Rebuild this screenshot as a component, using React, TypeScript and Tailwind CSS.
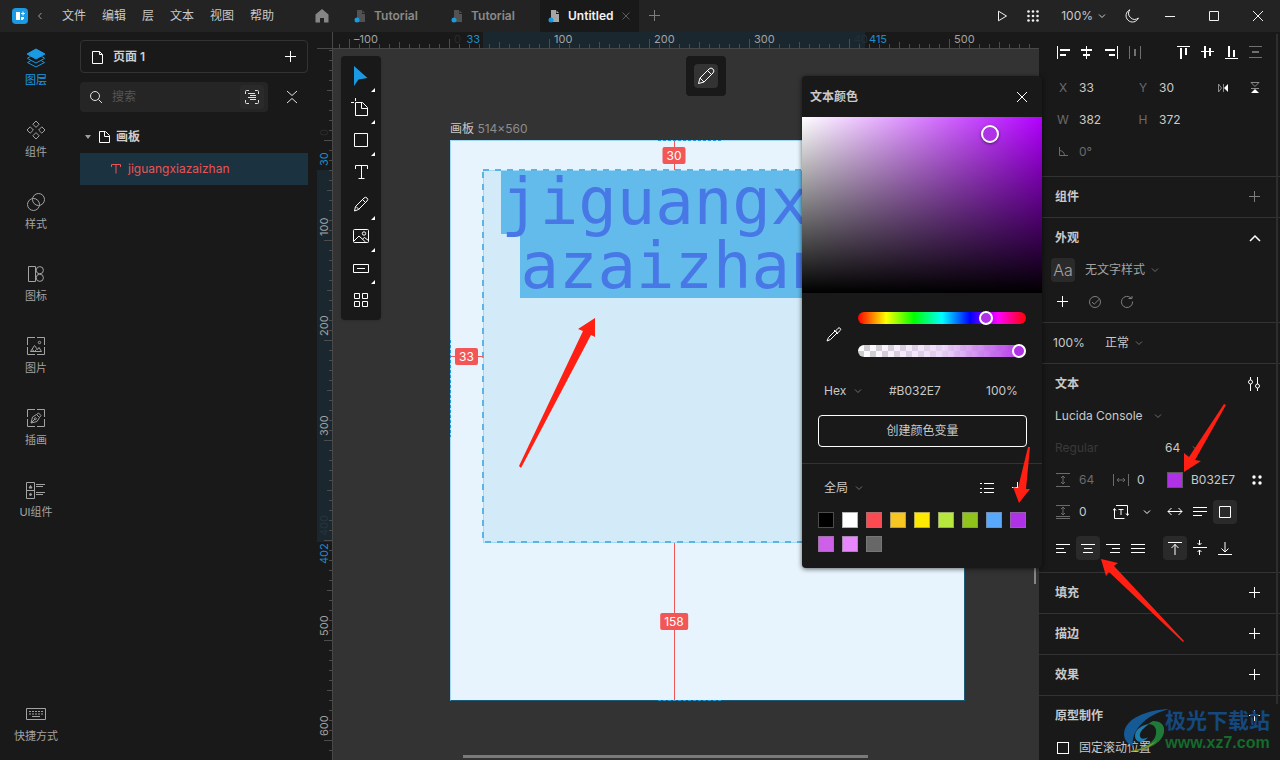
import type { ReactNode } from 'react'

const SWATCHES = [
  '#000000', '#ffffff', '#fc4a52', '#f6c622', '#fce800', '#b6e83e', '#90c41c', '#58a9fb', '#b032e7',
  '#ce5fe8', '#e688fc', '#676767',
]

interface IconProps {
  size?: number
  w?: number
  className?: string
  children: ReactNode
}

function Icon({ size = 16, w = 1, className = '', children }: IconProps) {
  return (
    <svg
      width={size}
      height={size}
      viewBox={`0 0 ${size} ${size}`}
      fill="none"
      stroke="currentColor"
      strokeWidth={w}
      className={`shrink-0 ${className}`}
      aria-hidden="true"
    >
      {children}
    </svg>
  )
}

function Chevron({ className = 'text-[#6e6e6e]' }: { className?: string }) {
  return (
    <Icon size={8} className={`pointer-events-none ${className}`}>
      <path d="M1 2.500l3 3 3-3" />
    </Icon>
  )
}

function Plus({ className = 'text-white' }: { className?: string }) {
  return (
    <Icon size={12} className={className}>
      <path d="M5.500 0v11M0 5.500h11" />
    </Icon>
  )
}

function IconButton({ label, active, children }: { label: string; active?: boolean; children: ReactNode }) {
  return (
    <button
      aria-label={label}
      className={`flex size-6 shrink-0 items-center justify-center rounded ${active ? 'bg-[#2a2a2a]' : ''}`}
    >
      {children}
    </button>
  )
}

/* ---------- Title bar ---------- */

const MENUS = ['文件', '编辑', '层', '文本', '视图', '帮助']

function FileTab({ name, active }: { name: string; active?: boolean }) {
  return (
    <div
      className={`flex h-8 items-center gap-2 px-2 ${
        active ? 'w-[99px] bg-[#191919] text-[#f2f2f2]' : 'w-[97px] text-[#8a8a8a]'
      }`}
    >
      <svg width="12" height="14" viewBox="0 0 12 14" aria-hidden="true" className="shrink-0">
        <path d="M3 1h5v4h3v8H3z" fill={active ? '#a6a6a6' : '#525252'} />
        <path d="M8.500 1.500L11 4H8.500z" fill={active ? '#a6a6a6' : '#525252'} />
        <circle cx="3" cy="11" r="2.500" fill="#1b9ae4" />
      </svg>
      <a href="#" className="text-xs font-semibold">{name}</a>
      {active && (
        <button aria-label="关闭标签" className="text-[#5e5e5e]">
          <Icon size={8}><path d="M.5.5l7 7M7.500.5l-7 7" /></Icon>
        </button>
      )}
    </div>
  )
}

function TitleBar() {
  return (
    <header className="flex h-8 shrink-0 items-center bg-[#232323]">
      <div className="flex w-[315px] shrink-0 items-center pl-3">
        <svg width="16" height="16" viewBox="0 0 16 16" aria-hidden="true">
          <rect width="16" height="16" rx="4" fill="#1b9ae4" />
          <path d="M4 4h4v8H4zM9 9h3v1.500L10.500 12H9zM10.500 3.500h1v1.500H13v1h-1.500v1.500h-1V6H9V5h1.500z" fill="#fff" />
        </svg>
        <Icon size={8} className="ml-2 text-[#a0a0a0]"><path d="M5.500 1l-3 3 3 3" /></Icon>
        <nav className="ml-[18px] flex gap-4">
          {MENUS.map((m) => (
            <button key={m} className="text-xs text-[#c9c9c9]">{m}</button>
          ))}
        </nav>
      </div>
      <button aria-label="首页" className="text-[#858585]">
        <svg width="14" height="14" viewBox="0 0 14 14" fill="currentColor">
          <path d="M7 0L.5 5.500V13.500h4.500V9h4v4.500h4.500V5.500z" />
        </svg>
      </button>
      <div className="ml-[17px] flex">
        <FileTab name="Tutorial" />
        <FileTab name="Tutorial" />
        <FileTab name="Untitled" active />
      </div>
      <button aria-label="新建标签" className="ml-2.5">
        <Plus className="text-[#7d7d7d]" />
      </button>
      <div className="ml-auto flex items-center pr-4 text-[#f0f0f0]">
        <button aria-label="预览">
          <Icon size={12}><path d="M1.500 1.200v9.600L9.500 6z" /></Icon>
        </button>
        <button aria-label="网格" className="ml-[18px]">
          <svg width="12" height="12" viewBox="0 0 12 12" fill="currentColor">
            {[1.5, 6, 10.5].map((y) => [1.5, 6, 10.5].map((x) => <circle key={`${x}-${y}`} cx={x} cy={y} r="1.300" />))}
          </svg>
        </button>
        <button className="ml-[22px] flex items-center gap-[5px] text-xs text-[#c9c9c9]">
          100%
          <Chevron className="text-[#d0d0d0]" />
        </button>
        <button aria-label="深色模式" className="ml-[19px]">
          <Icon size={14}><path d="M4.800.8a6.400 6.400 0 1 0 8.600 8.200A6 6 0 0 1 4.800.8z" /></Icon>
        </button>
        <button aria-label="最小化" className="ml-[25px]">
          <Icon size={12}><path d="M1 6.500h10" /></Icon>
        </button>
        <button aria-label="最大化" className="ml-8">
          <Icon size={12}><path d="M1.500 1.500h9v9h-9z" /></Icon>
        </button>
        <button aria-label="关闭" className="ml-8">
          <Icon size={12}><path d="M1 1l10 10M11 1L1 11" /></Icon>
        </button>
      </div>
    </header>
  )
}

/* ---------- Left rail ---------- */

const RAIL: { label: string; icon: ReactNode }[] = [
  {
    label: '图层',
    icon: (
      <>
        <path d="M10 1L19 6l-9 5-9-5z" fill="currentColor" />
        <path d="M1.500 10.500L10 15l8.500-4.500M1.500 10l3-1.500M18.500 10l-3-1.500M1.500 14.500L10 19l8.500-4.500M1.500 14.500l3-1.500M18.500 14.500l-3-1.500" />
      </>
    ),
  },
  {
    label: '组件',
    icon: (
      <path d="M10 1l3.200 3.200L10 7.400 6.800 4.200zM10 12.600l3.200 3.200L10 19l-3.200-3.200zM4.200 6.800L7.400 10l-3.200 3.200L1 10zM15.800 6.800L19 10l-3.200 3.200-3.200-3.200z" />
    ),
  },
  {
    label: '样式',
    icon: (
      <>
        <circle cx="12.500" cy="7.500" r="6" />
        <circle cx="7.500" cy="12.500" r="6" />
      </>
    ),
  },
  {
    label: '图标',
    icon: (
      <>
        <path d="M2.500 2.500h7v15h-7z" />
        <circle cx="13.800" cy="6.200" r="3.600" />
        <circle cx="13.800" cy="13.800" r="3.600" />
      </>
    ),
  },
  {
    label: '图片',
    icon: (
      <>
        <path d="M9 1.500H1.500V9M11 1.500h7.500V9M1.500 11v7.500H9M18.500 11v7.500H11" />
        <path d="M4.500 15.500l4-6 3 4 1.500-2 2.500 4zM6 13.500l2.500 2 2-2" />
        <circle cx="13.500" cy="6.500" r="1.200" />
      </>
    ),
  },
  {
    label: '插画',
    icon: (
      <>
        <path d="M9 1.500H1.500V9M11 1.500h7.500V9M1.500 11v7.500H9M18.500 11v7.500H11" />
        <path d="M5 15l1.500-6 4-2.500 3 3-2.500 4zM10.500 6.500L12.500 5 15 7.500l-1.500 2M5 15l4-4" />
        <circle cx="9.300" cy="10.700" r="1" />
      </>
    ),
  },
  {
    label: 'UI组件',
    icon: (
      <>
        <path d="M.5 2.500h8v16h-8zM.5 10.500h8M10 4.500h9M10 6.500h7M10 12.500h9M10 14.500h7" />
        <path d="M3 8l1.500-2.500L6 8z" fill="currentColor" />
        <circle cx="4.500" cy="14.500" r="1" fill="currentColor" />
      </>
    ),
  },
]

function Rail() {
  return (
    <nav className="flex w-[72px] shrink-0 flex-col justify-between pt-4 pb-4">
      <div className="flex flex-col gap-8">
        {RAIL.map((item, i) => (
          <button
            key={item.label}
            className={`flex flex-col items-center gap-1 text-[11px] leading-4 ${
              i === 0 ? 'text-[#1b9ae4]' : 'text-[#a3a3a3]'
            }`}
          >
            <Icon size={20}>{item.icon}</Icon>
            {item.label}
          </button>
        ))}
      </div>
      <button className="flex flex-col items-center gap-1 text-[11px] leading-4 text-[#a3a3a3]">
        <Icon size={20}>
          <path d="M.5 4.500h19v11H.5z" />
          <path d="M3 7.500h14M3 10h14" strokeDasharray="2 1" />
          <path d="M6 12.500h8" />
        </Icon>
        快捷方式
      </button>
    </nav>
  )
}

/* ---------- Layers ---------- */

function LayersPanel() {
  return (
    <aside className="w-[245px] shrink-0 pt-2 pr-[9px] pl-2 text-xs">
      <div className="flex h-[33px] items-center rounded border border-[#333] pr-2.5 pl-2">
        <Icon className="text-white"><path d="M3.500 2.500h7l3 3v9h-10zM10.500 2.500v3h3" /></Icon>
        <span className="ml-2 font-semibold text-[#cfcfcf]">页面 1</span>
        <button aria-label="添加页面" className="ml-auto">
          <Plus />
        </button>
      </div>
      <div className="mt-[9px] flex items-center">
        <label className="flex h-[30px] flex-1 items-center rounded bg-[#252525] pr-1 pl-2">
          <Icon className="text-[#e2e2e2]">
            <circle cx="7" cy="7" r="4.500" />
            <path d="M10.500 10.500L14 14" />
          </Icon>
          <input
            type="text"
            placeholder="搜索"
            aria-label="搜索"
            className="ml-2 w-full min-w-0 flex-1 bg-transparent placeholder:text-[#555]"
          />
          <IconButton label="筛选" active>
            <Icon className="text-[#e2e2e2]">
              <path d="M1.500 5V2.500a1 1 0 0 1 1-1H5M11 1.500h2.500a1 1 0 0 1 1 1V5M14.500 11v2.500a1 1 0 0 1-1 1H11M5 14.500H2.500a1 1 0 0 1-1-1V11M4 4.500h7M6 6.500h6M4 8.500h8M6 10.500h6" />
            </Icon>
          </IconButton>
        </label>
        <button aria-label="全部折叠" className="mr-2 ml-4 text-[#e2e2e2]">
          <Icon><path d="M3 2l5 4.500L13 2M3 14l5-4.500 5 4.500" /></Icon>
        </button>
      </div>
      <ul className="mt-[9px]">
        <li className="flex h-8 items-center pl-[5px]">
          <svg width="6" height="5" viewBox="0 0 6 5" fill="#a0a0a0" aria-hidden="true"><path d="M0 0h6L3 4z" /></svg>
          <Icon size={14} className="ml-[7px] text-white">
            <path d="M1.500 1.500h6l4 4v7h-10zM6.500 1.500v5h5" />
          </Icon>
          <span className="ml-1 font-semibold text-[#cfcfcf]">画板</span>
        </li>
        <li className="flex h-8 items-center bg-[#1b3240] pl-[31px] text-[#ea5455]">
          <Icon size={10}><path d="M.5 3V.5h9V3M5 .5v9" /></Icon>
          <span className="ml-[7px]">jiguangxiazaizhan</span>
        </li>
      </ul>
    </aside>
  )
}

/* ---------- Rulers ---------- */

function tickLength(v: number) {
  if (v % 100 === 0) return 9
  return v % 50 === 0 ? 6 : 4
}

function range(from: number, to: number) {
  const out: number[] = []
  for (let v = from; v <= to; v += 10) out.push(v)
  return out
}

// origin of the artboard, measured from the start of each ruler
const ORIGIN_X = 132
const ORIGIN_Y = 91

function TopRuler() {
  return (
    <svg className="block h-[17px] w-full text-[11px]" aria-hidden="true">
      <rect x={ORIGIN_X + 34} y="0" width="382" height="16" fill="#1a272f" />
      {range(-110, 2400).map((v) => (
        <path key={v} d={`M${ORIGIN_X + v + 0.5} ${16 - tickLength(v)}v${tickLength(v)}`} stroke="#4c4c4c" />
      ))}
      {[-100, 100, 200, 300, 500].map((v) => (
        <text key={v} x={ORIGIN_X + v + 5} y="11" fill="#a3a3a3">{v < 0 ? `–${-v}` : v}</text>
      ))}
      <text x={ORIGIN_X + 5} y="11" fill="#2b2b2b">0</text>
      <text x={ORIGIN_X + 405} y="11" fill="#223038">40</text>
      <text x={ORIGIN_X + 31} y="11" fill="#1b8fd0" textAnchor="end">33</text>
      <text x={ORIGIN_X + 420} y="11" fill="#1b8fd0">415</text>
      <path d="M0 16.500h4000M15.500 0v17" stroke="#484848" />
    </svg>
  )
}

function LeftRuler() {
  const label = (v: number, y: number, fill: string) => (
    <text key={`${v}-${y}`} transform={`translate(11 ${y}) rotate(-90)`} fill={fill}>{v}</text>
  )
  return (
    <svg className="block h-full w-4 shrink-0 text-[11px]" aria-hidden="true">
      <rect x="0" y={ORIGIN_Y + 30} width="15" height="372" fill="#1a272f" />
      {range(-90, 1600).map((v) => (
        <path key={v} d={`M${16 - tickLength(v)} ${ORIGIN_Y + v + 0.5}h${tickLength(v)}`} stroke="#4c4c4c" />
      ))}
      {[100, 200, 300, 500, 600].map((v) => label(v, ORIGIN_Y + v - 4, '#a3a3a3'))}
      {label(0, ORIGIN_Y - 4, '#2b2b2b')}
      {label(400, ORIGIN_Y + 396, '#26343c')}
      {label(30, ORIGIN_Y + 26, '#1b8fd0')}
      {label(402, ORIGIN_Y + 424, '#1b8fd0')}
      <path d="M15.500 0v3000" stroke="#484848" />
    </svg>
  )
}

/* ---------- Canvas ---------- */

const TOOLS: { label: string; more?: boolean; icon: ReactNode }[] = [
  { label: '选择', more: true, icon: <path d="M3 0v20l4.500-6.500L16.500 12z" fill="#1b9ae4" stroke="none" /> },
  { label: '画板', more: true, icon: <path d="M4.500 4.500h7l5 5v8h-12zM10.500 4.500v6h6M0 4.500h3M4.500 0v3" /> },
  { label: '矩形', more: true, icon: <path d="M3.500 3.500h13v13h-13z" /> },
  { label: '文本', icon: <path d="M4.500 7V3.500h12V7M10.500 3.500v13M7.500 16.500h6" /> },
  {
    label: '钢笔',
    more: true,
    icon: <path d="M3.500 17l1-4.500L13 4a2 2 0 0 1 3 3l-8.500 8.500zM5 12.500l3 3M11.500 5.500l3 3" />,
  },
  {
    label: '图片',
    more: true,
    icon: (
      <>
        <rect x="2.500" y="3.500" width="15" height="13" rx="1" />
        <path d="M3 15l5-5 6.500 6M11.500 13l2-1.500 4 3" />
        <circle cx="13" cy="7.500" r="1.700" />
      </>
    ),
  },
  { label: '按钮', more: true, icon: <path d="M2.500 6.500h15v8h-15zM6 10.500h8" /> },
  { label: '组件', icon: <path d="M3.500 3.500h5v5h-5zM11.500 3.500h5v5h-5zM3.500 11.500h5v5h-5zM11.500 11.500h5v5h-5z" /> },
]

function Toolbar() {
  return (
    <div className="absolute top-[7px] left-2 flex w-10 flex-col rounded bg-[#191919] py-1 shadow">
      {TOOLS.map((tool) => (
        <button key={tool.label} aria-label={tool.label} className="relative flex h-8 items-center justify-center text-white">
          <Icon size={20}>{tool.icon}</Icon>
          {tool.more && (
            <svg width="4" height="4" className="absolute right-1.5 bottom-0" fill="#fff" aria-hidden="true">
              <path d="M4 0v4H0z" />
            </svg>
          )}
        </button>
      ))}
    </div>
  )
}

function Artboard() {
  return (
    <div className="absolute top-[91px] left-[117px] h-[561px] w-[515px] border border-t-[#9fd8f5] border-r-[#1d5a78] border-b-[#1d5a78] border-l-[#9fd8f5] bg-[#e7f4fd]">
      <p className="absolute -top-5 -left-px text-xs leading-4 whitespace-nowrap text-[#8c8c8c]">
        <span className="text-[#c9c9c9]">画板</span> 514×560
      </p>
      <div className="absolute top-[29px] left-8 h-[373px] w-[383px] bg-[#d3ebf8]">
        <div className="mx-auto h-16 w-[348px] bg-[#63bbec]" />
        <div className="mx-auto h-16 w-[309px] bg-[#63bbec]" />
        <p className="absolute inset-x-0 top-0 text-center font-['DejaVu_Sans_Mono',monospace] text-[64px] leading-[64px] break-all text-[#4878e6]">
          jiguangxiazaizhan
        </p>
      </div>
      {/* text frame, snapping guides and distances */}
      <svg width="515" height="561" className="absolute -top-px -left-px" fill="none" aria-hidden="true">
        <rect x="33.500" y="30.500" width="382" height="372" stroke="#a5daf5" />
        <rect x="33" y="30" width="382" height="372" stroke="#5ab4e4" strokeWidth="2" strokeDasharray="6 6" />
        <path d="M208 .5h64M208 560.500h64M.5 200v97" stroke="#1b9ae4" strokeDasharray="3 2" />
        <path d="M224.500 1v29M224.500 403v157M1 216.500h32" stroke="#ee5555" />
      </svg>
      <span className="absolute top-1.5 left-[223px] -translate-x-1/2 rounded-xs bg-[#f25656] px-1 text-xs leading-[17px] text-white">30</span>
      <span className="absolute top-[207px] left-1 rounded-xs bg-[#f25656] px-1 text-xs leading-[17px] text-white">33</span>
      <span className="absolute top-[472px] left-[223px] -translate-x-1/2 rounded-xs bg-[#f25656] px-1 text-xs leading-[17px] text-white">158</span>
    </div>
  )
}

function ColorPopover() {
  return (
    <div className="absolute top-11 -right-[3px] z-10 w-60 rounded bg-[#191919] text-xs text-[#c9c9c9] shadow-[0_1px_5px_rgba(0,0,0,0.6)]">
      <div className="flex h-[41px] items-center justify-between pr-3.5 pl-2">
        <h2 className="font-semibold">文本颜色</h2>
        <button aria-label="关闭" className="text-white">
          <Icon size={12}><path d="M1 1l10 10M11 1L1 11" /></Icon>
        </button>
      </div>
      <div className="relative h-44 bg-[linear-gradient(to_top,#000,transparent),linear-gradient(to_right,#fff,#b200ff)]">
        <span className="absolute top-2 left-[179px] size-[18px] rounded-full border-2 border-white bg-[#b032e7] shadow-[0_1px_3px_rgba(0,0,0,0.5)]" />
      </div>
      <div className="flex h-[82px] items-center justify-between pr-4 pl-6">
        <button aria-label="吸管" className="text-white">
          <Icon>
            <path d="M1 15l1.500-3.500L9 5l2 2-6.500 6.500zM8 4l4 4M9.500 5L12 2.300a1.300 1.300 0 0 1 2.200 2.200L11.500 7z" />
          </Icon>
        </button>
        <div className="flex w-[168px] flex-col gap-[21px]">
          <input
            type="range"
            aria-label="色相"
            min={0}
            max={360}
            defaultValue={283}
            className="block h-3 w-full appearance-none rounded-full bg-[linear-gradient(to_right,#f00,#ff0,#0f0,#0ff,#00f,#f0f,#f00)] [&::-webkit-slider-thumb]:size-3.5 [&::-webkit-slider-thumb]:appearance-none [&::-webkit-slider-thumb]:rounded-full [&::-webkit-slider-thumb]:border-2 [&::-webkit-slider-thumb]:border-white [&::-webkit-slider-thumb]:bg-[#b032e7]"
          />
          <input
            type="range"
            aria-label="不透明度"
            defaultValue={100}
            className="block h-3 w-full appearance-none rounded-full bg-[linear-gradient(to_right,#ffffff00,#e9d0f8cc_50%,#b032e7),repeating-conic-gradient(#ccc_0_25%,#fff_0_50%)] bg-[length:100%_100%,12px_12px] [&::-webkit-slider-thumb]:size-3.5 [&::-webkit-slider-thumb]:appearance-none [&::-webkit-slider-thumb]:rounded-full [&::-webkit-slider-thumb]:border-2 [&::-webkit-slider-thumb]:border-white [&::-webkit-slider-thumb]:bg-[#b032e7]"
          />
        </div>
      </div>
      <div className="flex h-8 items-center pr-6 pl-[22px]">
        <Select label="颜色格式" value="Hex" width="w-[25px]" />
        <input aria-label="颜色值" defaultValue="#B032E7" className="ml-[27px] w-16 bg-transparent" />
        <input aria-label="透明度" defaultValue="100%" className="ml-auto w-8 bg-transparent" />
      </div>
      <button className="mx-4 mt-2 block h-8 w-[209px] rounded border border-white">
        创建颜色变量
      </button>
      <div className="mt-4 border-t border-[#333] px-4 pt-2 pb-4">
        <div className="flex h-8 items-center pl-1.5">
          <Select label="范围" value="全局" width="w-[26px]" />
          <button aria-label="列表视图" className="ml-auto text-white">
            <Icon size={14}><path d="M0 2.500h2M4 2.500h10M0 7.500h2M4 7.500h10M0 11.500h2M4 11.500h10" /></Icon>
          </button>
          <button aria-label="添加颜色" className="mr-0.5 ml-[18px]">
            <Plus />
          </button>
        </div>
        <div className="mt-2 grid grid-cols-9 gap-2">
          {SWATCHES.map((c) => (
            <button
              key={c}
              aria-label={c}
              className="size-4 border border-[#808080]/60"
              style={{ backgroundColor: c }}
            />
          ))}
        </div>
      </div>
      <svg width="18" height="58" viewBox="0 0 18 58" className="absolute top-[370px] left-[211px]" fill="#ff2013" aria-hidden="true">
        <path d="M15 1h2l-4 42h4L6 57 0 41l5 1z" />
      </svg>
    </div>
  )
}

function Canvas() {
  return (
    <main className="relative flex min-w-0 flex-1 flex-col">
      <TopRuler />
      <div className="flex min-h-0 flex-1">
        <LeftRuler />
        <div className="relative flex-1 overflow-hidden bg-[#333]">
          <Artboard />
          <Toolbar />
          <div className="absolute top-[7px] left-1/2 flex size-10 items-center justify-center rounded bg-[#191919]">
            <button aria-label="编辑" className="flex size-6 items-center justify-center rounded bg-[#333] text-white">
              <Icon size={20}>
                <path d="M2.500 17.500l1.500-5.500L13 3a2 2 0 0 1 4 4l-9 9zM4 12l4 4M11.500 4.500l4 4" />
              </Icon>
            </button>
          </div>
          <svg width="78" height="152" viewBox="0 0 78 152" className="absolute top-[268px] left-[186px]" fill="#ff2013" aria-hidden="true">
            <path d="M76 1L59 12l5 2L0 149l2 2L72 18l4 2z" />
          </svg>
          <div className="absolute bottom-0.5 left-[130px] h-[3px] w-[405px] bg-[#7a7a7a]" />
          <div className="absolute top-[440px] right-[3px] h-[95px] w-0.5 bg-[#858585]" />
        </div>
      </div>
      <ColorPopover />
    </main>
  )
}

/* ---------- Inspector ---------- */

interface SelectProps {
  label: string
  value: string
  width: string
  className?: string
}

function Select({ label, value, width, className = '' }: SelectProps) {
  return (
    <span className={`flex items-center gap-[5px] ${className}`}>
      <select aria-label={label} className={`appearance-none bg-transparent ${width}`}>
        <option>{value}</option>
      </select>
      <Chevron />
    </span>
  )
}

interface FieldProps {
  name: string
  value: string
  icon?: ReactNode
  dim?: boolean
  narrow?: boolean
}

function Field({ name, value, icon, dim, narrow }: FieldProps) {
  return (
    <label className={`flex shrink-0 items-center gap-1 ${narrow ? 'w-[58px]' : 'w-20'}`}>
      <span className="flex w-6 justify-center text-[#6b6b6b]">{icon ?? name}</span>
      <input
        aria-label={name}
        defaultValue={value}
        className={`w-7 bg-transparent ${dim ? 'text-[#6b6b6b]' : 'text-[#c9c9c9]'}`}
      />
    </label>
  )
}

function SectionTitle({ title, children }: { title: string; children?: ReactNode }) {
  return (
    <div className="flex h-10 items-center justify-between pr-[19px] pl-4">
      <h3 className="font-semibold">{title}</h3>
      <button aria-label={title}>{children ?? <Plus />}</button>
    </div>
  )
}

function AlignRow() {
  return (
    <div className="mt-1 flex h-8 items-center justify-between pr-[13px] pl-3 text-white">
      <div className="flex">
        <IconButton label="左对齐">
          <Icon><path d="M2.500 2v13" /><path d="M5 6h10M5 11h6" strokeWidth="2" /></Icon>
        </IconButton>
        <IconButton label="水平居中">
          <Icon><path d="M7.500 2v13" /><path d="M2 6h11M4 11h7" strokeWidth="2" /></Icon>
        </IconButton>
        <IconButton label="右对齐">
          <Icon><path d="M14.500 2v13" /><path d="M2 6h10M6 11h6" strokeWidth="2" /></Icon>
        </IconButton>
        <IconButton label="水平分布">
          <Icon className="text-[#707070]"><path d="M2.500 2v13M13.500 2v13" /><path d="M8 5v7" strokeWidth="2" /></Icon>
        </IconButton>
      </div>
      <div className="flex">
        <IconButton label="顶对齐">
          <Icon><path d="M2 2.500h13" /><path d="M6 4v11M11 4v7" strokeWidth="2" /></Icon>
        </IconButton>
        <IconButton label="垂直居中">
          <Icon><path d="M2 7.500h13" /><path d="M6 2v12M11 4v8" strokeWidth="2" /></Icon>
        </IconButton>
        <IconButton label="底对齐">
          <Icon><path d="M2 14.500h13" /><path d="M6 2v11M11 6v7" strokeWidth="2" /></Icon>
        </IconButton>
        <IconButton label="垂直分布">
          <Icon className="text-[#707070]"><path d="M2 2.500h13M2 13.500h13" /><path d="M5 8h7" strokeWidth="2" /></Icon>
        </IconButton>
      </div>
    </div>
  )
}

function TextSection() {
  return (
    <section className="border-b border-[#333] pb-3">
      <SectionTitle title="文本">
        <Icon size={14} className="text-white">
          <path d="M3.500 0v3M3.500 7v7M10.500 0v7M10.500 11v3" />
          <circle cx="3.500" cy="5" r="2" />
          <circle cx="10.500" cy="9" r="2" />
        </Icon>
      </SectionTitle>
      <div className="flex h-6 items-center pl-4">
        <Select label="字体" value="Lucida Console" width="w-[94px]" />
      </div>
      <div className="mt-1 flex h-8 items-center pl-4">
        <span className="w-[110px] text-[#3a3a3a]">Regular</span>
        <Select label="字号" value="64" width="w-[22px]" />
      </div>
      <div className="flex h-8 items-center pr-[18px] pl-3">
        <Field
          narrow
          name="行高"
          value="64"
          dim
          icon={<Icon><path d="M1 1.500h14M1 14.500h14M8 4v8M6 6l2-2 2 2M6 10l2 2 2-2" /></Icon>}
        />
        <Field
          narrow
          name="字间距"
          value="0"
          icon={<Icon><path d="M.5 2v12M15.500 2v12M4 8h8M6 6L4 8l2 2M10 6l2 2-2 2" /></Icon>}
        />
        <button aria-label="文本颜色" className="size-4 shrink-0 border border-[#5a5a5a] bg-[#b032e7]" />
        <input aria-label="色值" defaultValue="B032E7" className="ml-2 w-14 bg-transparent" />
        <button aria-label="变量" className="ml-auto text-white">
          <svg width="10" height="10" viewBox="0 0 10 10" fill="currentColor">
            <circle cx="2" cy="2" r="1.700" />
            <circle cx="8" cy="2" r="1.700" />
            <circle cx="2" cy="8" r="1.700" />
            <circle cx="8" cy="8" r="1.700" />
          </svg>
        </button>
      </div>
      <div className="flex h-8 items-center pl-3 text-white">
        <Field
          narrow
          name="段间距"
          value="0"
          icon={<Icon><path d="M1 1.500h14M1 12.500h14M1 14.500h14M8 3v8M6 5l2-2 2 2M6 9l2 2 2-2" /></Icon>}
        />
        <IconButton label="文本框">
          <Icon><path d="M1.500 5v9.500h10M3 1.500h11.500V11M0 6.500l1.500-2 1.500 2M13 9.500l1.500 2 1.500-2M5.500 5.500h5M8 5.500V11" /></Icon>
        </IconButton>
        <Chevron className="ml-2.5 text-white" />
        <div className="ml-3 flex gap-px">
          <IconButton label="自动宽度">
            <Icon><path d="M1 7.500h14M4.500 4L1 7.500 4.500 11M11.500 4L15 7.500 11.500 11" /></Icon>
          </IconButton>
          <IconButton label="自动高度">
            <Icon><path d="M1 3.500h14M1 7.500h14M1 11.500h9" /></Icon>
          </IconButton>
          <IconButton label="固定尺寸" active>
            <Icon><path d="M2.500 2.500h11v11h-11z" /></Icon>
          </IconButton>
        </div>
      </div>
      <div className="mt-2 flex h-6 items-center pl-3 text-white">
        <div className="flex gap-px">
          <IconButton label="文本左对齐">
            <Icon><path d="M1 4.500h14M1 8.500h8M1 12.500h10" /></Icon>
          </IconButton>
          <IconButton label="文本居中" active>
            <Icon><path d="M1 4.500h14M4 8.500h8M3 12.500h10" /></Icon>
          </IconButton>
          <IconButton label="文本右对齐">
            <Icon><path d="M1 4.500h14M7 8.500h8M5 12.500h10" /></Icon>
          </IconButton>
          <IconButton label="两端对齐">
            <Icon><path d="M1 4.500h14M1 8.500h14M1 12.500h14" /></Icon>
          </IconButton>
        </div>
        <div className="ml-[13px] flex gap-px">
          <IconButton label="文本顶对齐" active>
            <Icon><path d="M1 2.500h14M8 4v11M4.500 8L8 4.500 11.500 8" /></Icon>
          </IconButton>
          <IconButton label="文本垂直居中">
            <Icon><path d="M1 7.500h14M7.500 0v5M5.500 3l2 2 2-2M7.500 15v-5M5.500 12l2-2 2 2" /></Icon>
          </IconButton>
          <IconButton label="文本底对齐">
            <Icon><path d="M1 14.500h14M8 2v10M4.500 8.500L8 12l3.500-3.500" /></Icon>
          </IconButton>
        </div>
      </div>
    </section>
  )
}

function Watermark() {
  return (
    <div className="pointer-events-none absolute right-2.5 bottom-1.5 flex items-center">
      <svg width="46" height="46" viewBox="0 0 46 46" aria-hidden="true">
        <path d="M46 1C24 2 2 10 1 26c0 6 4 10 9 12C8 24 20 8 46 1z" fill="#155a94" />
        <path d="M30 13c8 0 12 4 11 11C39 36 24 42 8 43c14-3 24-9 25-17 1-6-2-10-8-10z" fill="#1f7a3a" />
        <path d="M26 16c-8 1-14 6-14 12 0 7 9 8 13 1-4 3-9 2-8-3 1-4 5-7 9-10z" fill="#1c7db0" />
        <path d="M6 43c10 1 22-3 28-11-7 6-17 10-28 11z" fill="#8a9a20" />
      </svg>
      <div className="-ml-1 flex flex-col items-center font-bold whitespace-nowrap">
        <span className="text-[21px] leading-6 text-[#15487d]">极光下载站</span>
        <span className="font-['Liberation_Sans',sans-serif] text-base leading-5 text-[#136b2c]">www.xz7.com</span>
      </div>
    </div>
  )
}

function Inspector() {
  return (
    <aside className="relative w-[241px] shrink-0 overflow-hidden text-xs text-[#c9c9c9]">
      <div className="border-b border-[#333] pb-2">
        <AlignRow />
        <div className="mt-1 flex h-8 items-center pl-3">
          <Field name="X" value="33" />
          <Field name="Y" value="30" />
          <div className="flex gap-2">
            <IconButton label="水平翻转">
              <Icon size={12} className="text-[#8a8a8a]">
                <path d="M1.500 2v8l3-4zM6.500 2v8" />
                <path d="M11 2v8L7 6z" fill="#fff" stroke="none" />
              </Icon>
            </IconButton>
            <IconButton label="垂直翻转">
              <Icon size={12} className="text-[#8a8a8a]">
                <path d="M2 .5h8L6 4.500zM2 6.500h8" />
                <path d="M2 11h8L6 7z" fill="#fff" stroke="none" />
              </Icon>
            </IconButton>
          </div>
        </div>
        <div className="flex h-8 items-center pl-3">
          <Field name="W" value="382" />
          <Field name="H" value="372" />
        </div>
        <div className="flex h-8 items-center pl-3">
          <Field
            name="角度"
            value="0°"
            dim
            icon={<Icon size={10}><path d="M1.500 0v8.500H10M1.500 3.500a5 5 0 0 1 5 5" /></Icon>}
          />
        </div>
      </div>

      <div className="border-b border-[#333]">
        <SectionTitle title="组件"><Plus className="text-[#7d7d7d]" /></SectionTitle>
      </div>

      <div className="border-b border-[#333] pb-1">
        <SectionTitle title="外观">
          <Icon size={12} className="text-white"><path d="M1 9l5-5 5 5" strokeWidth="1.500" /></Icon>
        </SectionTitle>
        <div className="flex h-6 items-center pl-3 text-[#a3a3a3]">
          <span className="flex size-6 items-center justify-center rounded bg-[#2a2a2a] text-base font-light">Aa</span>
          <Select label="文字样式" value="无文字样式" width="w-[61px]" className="ml-2.5" />
        </div>
        <div className="mt-1 flex h-8 items-center gap-2 pl-3">
          <IconButton label="新建样式"><Plus /></IconButton>
          <IconButton label="应用样式">
            <Icon size={14} className="text-[#7d7d7d]"><circle cx="7" cy="7" r="5.500" /><path d="M4 7l2.200 2.200L11.500 4" /></Icon>
          </IconButton>
          <IconButton label="重置样式">
            <Icon size={14} className="text-[#7d7d7d]"><path d="M11 3A5.600 5.600 0 1 0 12.600 6.500M8.500 3.500h3.500V1" /></Icon>
          </IconButton>
        </div>
      </div>

      <div className="flex h-[41px] items-center border-b border-[#333] pl-3.5">
        <input aria-label="不透明度" defaultValue="100%" className="w-13 bg-transparent" />
        <Select label="混合模式" value="正常" width="w-[25px]" />
      </div>

      <TextSection />

      {['填充', '描边', '效果'].map((title) => (
        <div key={title} className="border-b border-[#333]">
          <SectionTitle title={title} />
        </div>
      ))}

      <SectionTitle title="原型制作" />
      <label className="flex h-6 items-center gap-2.5 pl-[18px]">
        <input type="checkbox" className="size-3 appearance-none border border-white" />
        固定滚动位置
      </label>

      <div className="absolute top-0.5 right-0.5 h-[670px] w-0.5 bg-[#2e2e2e]" />
      <svg width="42" height="70" viewBox="0 0 42 70" className="absolute top-[371px] left-[145px]" fill="#ff2013" aria-hidden="true">
        <path d="M0 69V50l5 4L40 1l2 1-31 55 6 1z" />
      </svg>
      <svg width="84" height="84" viewBox="0 0 84 84" className="absolute top-[527px] left-[62px]" fill="#ff2013" aria-hidden="true">
        <path d="M0 0l17 4-4 3 70 75-1 1L8 13l-3 4z" />
      </svg>
      <Watermark />
    </aside>
  )
}

export default function App() {
  return (
    <div className="flex h-screen flex-col overflow-hidden bg-[#191919] font-[Inter,'Noto_Sans_CJK_SC',sans-serif]">
      <TitleBar />
      <div className="flex min-h-0 flex-1">
        <Rail />
        <LayersPanel />
        <Canvas />
        <Inspector />
      </div>
    </div>
  )
}
